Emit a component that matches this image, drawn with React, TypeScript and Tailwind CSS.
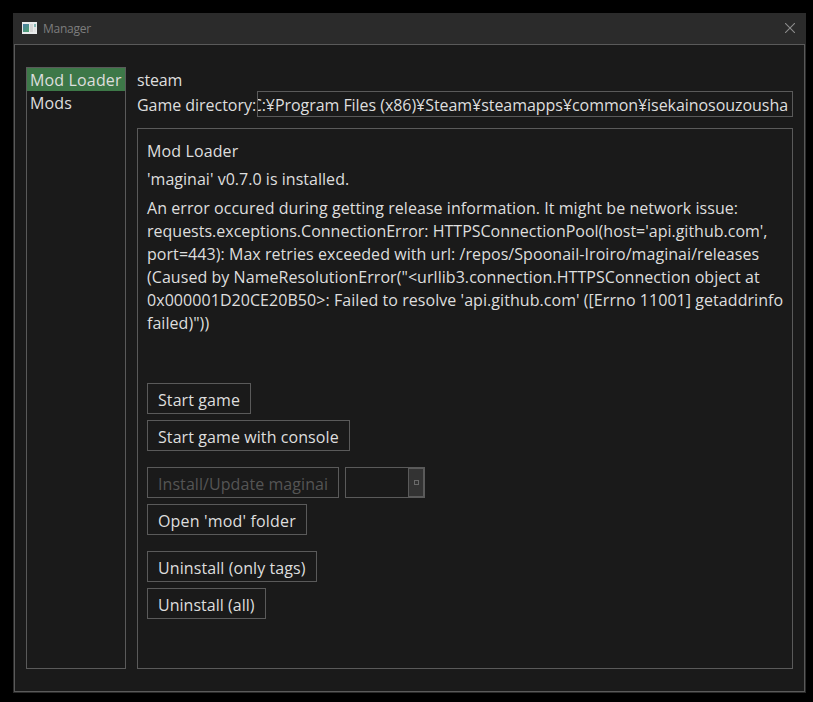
const errorLines = [
  { text: "An error occured during getting release information. It might be network issue:", style: "tracking-[0.058px]" },
  { text: "requests.exceptions.ConnectionError: HTTPSConnectionPool(host='api.github.com',", style: "tracking-[0px]" },
  { text: "port=443): Max retries exceeded with url: /repos/Spoonail-Iroiro/maginai/releases", style: "tracking-[0.055px]" },
  { text: "(Caused by NameResolutionError(\"<urllib3.connection.HTTPSConnection object at", style: "tracking-[0.055px]" },
  { text: "0x000001D20CE20B50>: Failed to resolve 'api.github.com' ([Errno 11001] getaddrinfo", style: "tracking-[0.058px]" },
  { text: "failed)\"))", style: "tracking-[0.05px]" },
];

interface ButtonProps {
  label: string;
  className: string;
  disabled?: boolean;
}

function Button({ label, className, disabled }: ButtonProps) {
  return (
    <button
      disabled={disabled}
      className={`flex h-[31px] shrink-0 items-center whitespace-nowrap border border-[#5a5a5a] pl-[10px] pt-[3px] text-left ${disabled ? "text-[#555]" : "text-[#dedede]"} ${className}`}
    >
      {label}
    </button>
  );
}

function AppIcon() {
  return (
    <svg width="15" height="12" viewBox="0 0 15 12" shapeRendering="crispEdges">
      <defs>
        <linearGradient id="pane" x1="0" y1="0" x2="0.6" y2="1">
          <stop offset="0" stopColor="#4b7fa8" />
          <stop offset="1" stopColor="#4f9d75" />
        </linearGradient>
      </defs>
      <rect width="15" height="12" fill="#e9ebec" />
      <rect x="1" y="2" width="6" height="8" fill="url(#pane)" />
      <rect x="8" y="2" width="3" height="8" fill="#d6d6d6" />
      <rect x="12" y="2" width="2" height="3" fill="#83b7b4" />
      <rect x="12" y="5" width="2" height="5" fill="#e3e3e3" />
    </svg>
  );
}

export default function App() {
  return (
    <div className="h-[702px] w-[813px] overflow-hidden bg-black pl-[13px] pt-[13px] font-['Open_Sans','Noto_Sans',sans-serif] text-[16px] leading-[23px] text-[#dedede]">
      <div className="flex h-[680px] w-[793px] flex-col bg-[#2b2b2b] px-px pb-px">
        <header className="flex h-[31px] shrink-0 items-start justify-between pl-2 pr-[10px] pt-[9px]">
          <div className="flex items-start gap-[6px]">
            <AppIcon />
            <span className="-mt-px text-[12px] leading-4 tracking-[-0.25px] text-[#7d7d7d]">Manager</span>
          </div>
          <svg className="mt-px" width="10" height="10" viewBox="0 0 10 10" stroke="#8c8c8c" strokeWidth="1.1">
            <path d="M0 0 10 10M10 0 0 10" />
          </svg>
        </header>
        <main className="flex min-h-0 flex-1 gap-[11px] border border-[#5a5a5a] bg-[#1a1a1a] pb-[22px] pl-[11px] pr-[11px] pt-[22px]">
          <nav className="w-[100px] shrink-0 border border-[#5a5a5a] tracking-[0.15px]">
            <div className="h-[23px] whitespace-nowrap bg-[#3d7848] pl-[3px] pt-px">Mod Loader</div>
            <div className="h-[23px] pl-[3px] pt-px">Mods</div>
          </nav>
          <section className="flex min-w-0 flex-1 flex-col">
            <div className="h-6 pt-[2px] tracking-[-0.2px]">steam</div>
            <div className="flex h-[26px]">
              <span className="w-[120px] shrink-0 whitespace-nowrap pt-[3px] tracking-[-0.03px]">Game directory:</span>
              <div className="flex min-w-0 flex-1 justify-end overflow-hidden whitespace-nowrap border border-[#5a5a5a] pr-[4px] pt-[2px] tracking-[-0.05px]">
                <span>C:¥Program Files (x86)¥Steam¥steamapps¥common¥isekainosouzousha</span>
              </div>
            </div>
            <div className="mt-[11px] flex min-h-0 flex-1 flex-col items-start border border-[#5a5a5a] pl-[9px] pt-[11px]">
              <div className="tracking-[0.12px]">Mod Loader</div>
              <div className="mt-[5px] tracking-[0.03px]">'maginai' v0.7.0 is installed.</div>
              <div className="mt-[6px] h-[186px] whitespace-nowrap">
                {errorLines.map((line) => (
                  <div key={line.text} className={line.style}>{line.text}</div>
                ))}
              </div>
              <div className="flex flex-col items-start gap-[6px]">
                <Button label="Start game" className="w-[104px] tracking-[0.085px]" />
                <Button label="Start game with console" className="w-[203px] tracking-[0.085px]" />
              </div>
              <div className="mt-4 flex flex-col items-start gap-[6px]">
                <div className="flex gap-[6px]">
                  <Button label="Install/Update maginai" className="w-[192px] tracking-[0.07px]" disabled />
                  <div className="flex h-[31px] w-20 justify-end border border-[#5a5a5a]">
                    <div className="flex h-full w-4 items-center justify-end border border-[#5a5a5a] bg-[#333] pr-1">
                      <div className="size-[5px] border border-[#6a6a6a]" />
                    </div>
                  </div>
                </div>
                <Button label="Open 'mod' folder" className="w-40 tracking-[0.17px]" />
              </div>
              <div className="mt-4 flex flex-col items-start gap-[6px]">
                <Button label="Uninstall (only tags)" className="w-[170px] tracking-[0.085px]" />
                <Button label="Uninstall (all)" className="w-[119px] tracking-[0.02px]" />
              </div>
            </div>
          </section>
        </main>
      </div>
    </div>
  );
}
